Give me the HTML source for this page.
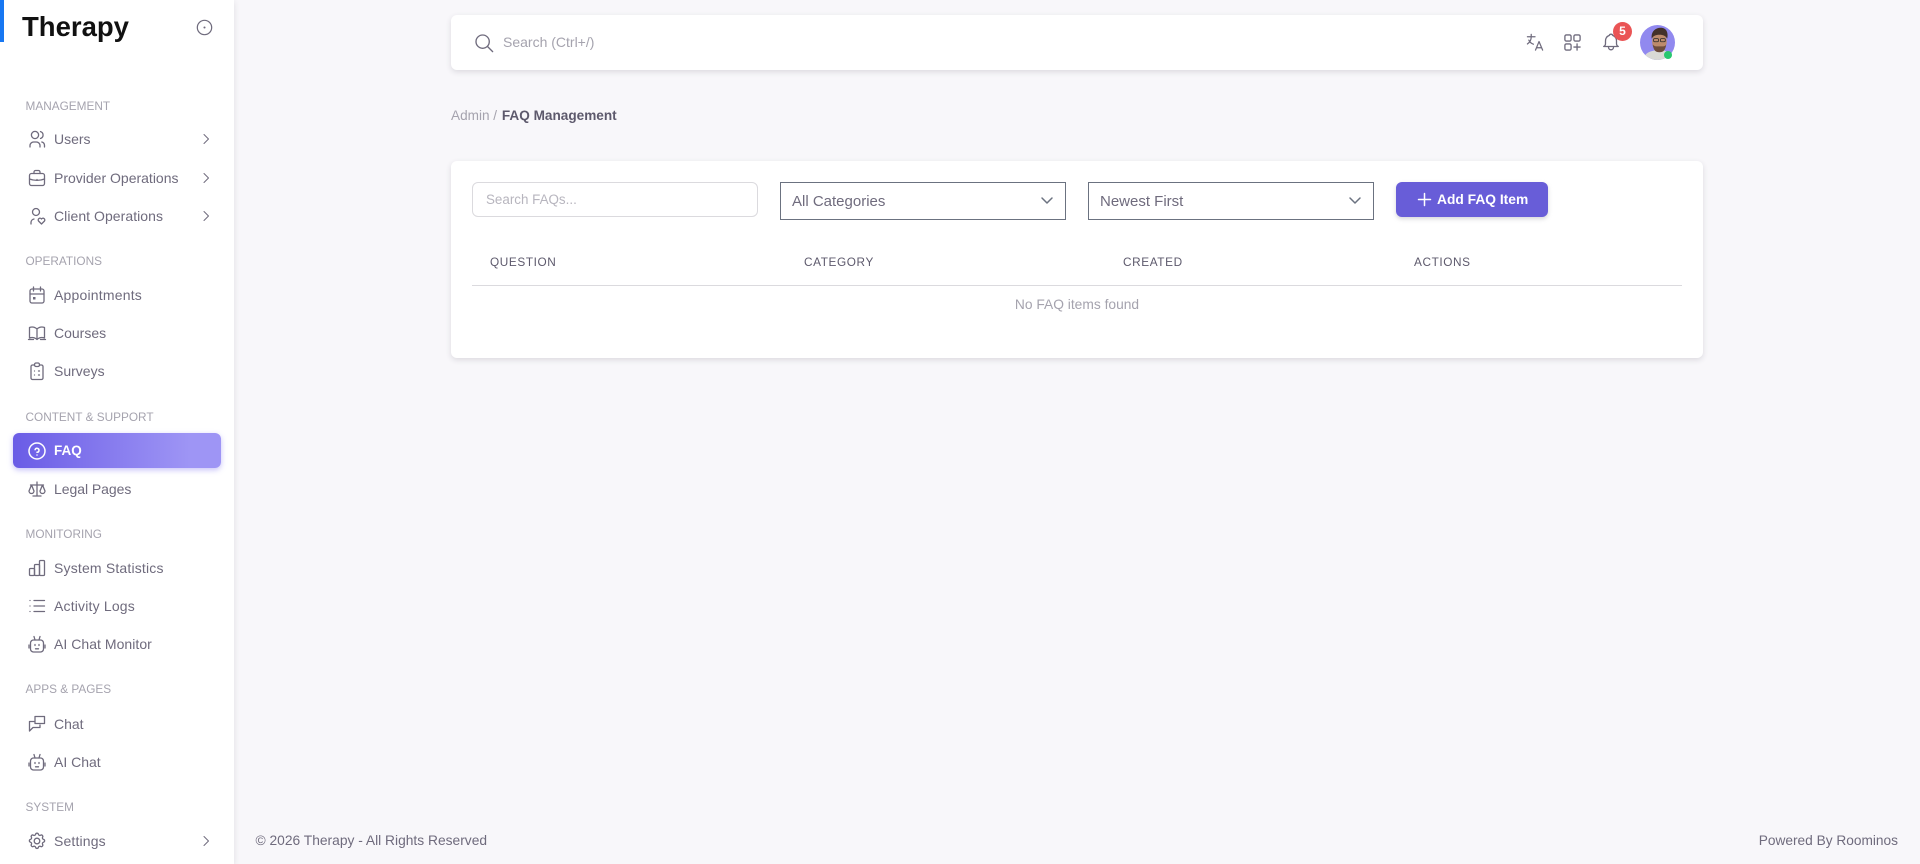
<!DOCTYPE html>
<html><head><meta charset="utf-8"><title>FAQ Management</title>
<style>
*{box-sizing:border-box}
html,body{margin:0;padding:0}
body{width:1920px;height:864px;overflow:hidden;background:#f8f7fa;font-family:"Liberation Sans",sans-serif;position:relative;color:#6f6b7d}
.t{position:absolute;white-space:nowrap;line-height:20px;height:20px}
.m{left:54px;font-size:14px;color:#6f6b7d}
.h{left:25.500px;font-size:11.800px;color:#a5a3ae}
.i{position:absolute;left:27px;width:20px;height:20px;fill:none;stroke:#6f6b7d;stroke-width:1.300;stroke-linecap:round;stroke-linejoin:round}
.c{position:absolute;left:200px;width:12px;height:12px;fill:none;stroke:#6f6b7d;stroke-width:1;stroke-linecap:round;stroke-linejoin:round}
.th{font-size:11.800px;letter-spacing:.6px;color:#5d596c}
#side{position:absolute;left:0;top:0;width:234px;height:864px;background:#fff;box-shadow:0 2px 6px rgba(47,43,61,.12)}
.box{position:absolute;background:#fff;border-radius:6px;box-shadow:0 2px 6px rgba(47,43,61,.14)}
.sel{position:absolute;top:182px;height:38px;width:286px;border:1px solid #6b7280;background:#fff}
</style></head><body>
<div id="side">
<div style="position:absolute;left:0;top:0;width:4px;height:42px;background:#1877f2"></div>
<div class="t" style="left:22px;top:15px;font-size:27.500px;line-height:24px;height:24px;font-weight:700;color:#111">Therapy</div>
<svg style="position:absolute;left:196px;top:19px;width:17px;height:17px" viewBox="0 0 18 18" fill="none" stroke="#6f6b7d" stroke-width="1.300"><circle cx="9" cy="9" r="7.600"/><circle cx="9" cy="9" r="1.100" fill="#6f6b7d" stroke="none"/></svg>

<div class="t h" style="top:96px">MANAGEMENT</div>
<svg class="i" style="top:129px" viewBox="0 0 20 20"><circle cx="8" cy="6" r="3.600"/><path d="M3 18v-1.600A3.600 3.600 0 0 1 6.600 13h2.800A3.600 3.600 0 0 1 13 16.400V18M13.500 2.600a3.600 3.600 0 0 1 0 6.900M17.500 18v-1.600a3.600 3.600 0 0 0-2.700-3.400"/></svg>
<div class="t m" style="top:129px">Users</div>
<svg class="c" style="top:133px" viewBox="0 0 12 12"><path d="M4 1.500 8.500 6 4 10.500"/></svg>
<svg class="i" style="top:168px" viewBox="0 0 20 20"><rect x="2.500" y="5.500" width="15" height="12" rx="2"/><path d="M7 5.500V4a1.500 1.500 0 0 1 1.500-1.500h3A1.500 1.500 0 0 1 13 4v1.500M2.500 11c4.500 1.800 10.500 1.800 15 0M10 11.500v.01"/></svg>
<div class="t m" style="top:168px">Provider Operations</div>
<svg class="c" style="top:172px" viewBox="0 0 12 12"><path d="M4 1.500 8.500 6 4 10.500"/></svg>
<svg class="i" style="top:206px" viewBox="0 0 20 20"><circle cx="9" cy="6" r="3.500"/><path d="M4 18v-1.600a3.600 3.600 0 0 1 3-3.400M14.500 18l-3-3a1.800 1.800 0 0 1 3-2 1.800 1.800 0 0 1 3 2z"/></svg>
<div class="t m" style="top:206px;letter-spacing:.05px">Client Operations</div>
<svg class="c" style="top:210px" viewBox="0 0 12 12"><path d="M4 1.500 8.500 6 4 10.500"/></svg>

<div class="t h" style="top:251px">OPERATIONS</div>
<svg class="i" style="top:285px" viewBox="0 0 20 20"><rect x="3" y="4" width="14" height="14" rx="2"/><path d="M13.500 2v4M6.500 2v4M3 9h14"/><rect x="6" y="12" width="2.500" height="2.500" fill="#6f6b7d" stroke="none"/></svg>
<div class="t m" style="top:285px;letter-spacing:.2px">Appointments</div>
<svg class="i" style="top:323px" viewBox="0 0 20 20"><path d="M10 16.500A7.500 7.500 0 0 0 2.500 15V4.500A7.500 7.500 0 0 1 10 6a7.500 7.500 0 0 1 7.500-1.500V15a7.500 7.500 0 0 0-7.500 1.500zM10 6v10.500M1.500 16.500h5M13.500 16.500h5"/></svg>
<div class="t m" style="top:323px">Courses</div>
<svg class="i" style="top:361px" viewBox="0 0 20 20"><path d="M7.500 4H5.500A1.500 1.500 0 0 0 4 5.500V17a1.500 1.500 0 0 0 1.500 1.500h9A1.500 1.500 0 0 0 16 17V5.500A1.500 1.500 0 0 0 14.500 4h-2"/><rect x="7.500" y="2" width="5" height="3.500" rx="1.500"/><path d="M7.500 10h.01M7.500 14h.01M11.500 10h1M11.500 14h1"/></svg>
<div class="t m" style="top:361px">Surveys</div>

<div class="t h" style="top:407px">CONTENT &amp; SUPPORT</div>
<div style="position:absolute;left:13px;top:433px;width:208px;height:35px;border-radius:6px;background:linear-gradient(90deg,#6a5ce6 0%,#9e95f5 85%);box-shadow:0 2px 6px rgba(115,103,240,.4)"></div>
<svg class="i" style="top:441px;stroke:#fff;stroke-width:1.500" viewBox="0 0 20 20"><circle cx="10" cy="10" r="8"/><path d="M10 14v.01M10 11.300a2 2 0 1 0-1.900-2.600"/></svg>
<div class="t m" style="top:441px;color:#fff;font-weight:700;font-size:13.500px">FAQ</div>
<svg class="i" style="top:479px" viewBox="0 0 20 20"><path d="M6 17h8M10 3v14M3.500 6h13M2 12l2.500-6L7 12a2.500 2.500 0 0 1-5 0zM13 12l2.500-6 2.500 6a2.500 2.500 0 0 1-5 0z"/></svg>
<div class="t m" style="top:479px;letter-spacing:-.05px">Legal Pages</div>

<div class="t h" style="top:524px">MONITORING</div>
<svg class="i" style="top:558px" viewBox="0 0 20 20"><rect x="2.500" y="10.500" width="5" height="7" rx="1"/><rect x="7.500" y="6.500" width="5" height="11" rx="1"/><rect x="12.500" y="2.500" width="5" height="15" rx="1"/></svg>
<div class="t m" style="top:558px;letter-spacing:.18px">System Statistics</div>
<svg class="i" style="top:596px" viewBox="0 0 20 20"><path d="M7 4.500h10.500M7 10h10.500M7 15.500h10.500M3 4.500v.01M3 10v.01M3 15.500v.01"/></svg>
<div class="t m" style="top:596px;letter-spacing:.18px">Activity Logs</div>
<svg class="i" style="top:634px" viewBox="0 0 20 20"><rect x="3.500" y="6" width="13" height="12" rx="3"/><path d="M7 2.500 8 6M13 2.500 12 6M8 10.500v1M12 10.500v1M2 11v3M18 11v3M8.500 14.800h3"/></svg>
<div class="t m" style="top:634px;letter-spacing:.04px">AI Chat Monitor</div>

<div class="t h" style="top:679px">APPS &amp; PAGES</div>
<svg class="i" style="top:714px" viewBox="0 0 20 20"><path d="M13 11v2.500H6L2.500 17V7.500H8M8 2.500h9.500V9.500H8z"/></svg>
<div class="t m" style="top:714px">Chat</div>
<svg class="i" style="top:752px" viewBox="0 0 20 20"><rect x="3.500" y="6" width="13" height="12" rx="3"/><path d="M7 2.500 8 6M13 2.500 12 6M8 10.500v1M12 10.500v1M2 11v3M18 11v3M8.500 14.800h3"/></svg>
<div class="t m" style="top:752px">AI Chat</div>

<div class="t h" style="top:797px">SYSTEM</div>
<svg class="i" style="top:831px" viewBox="0 0 20 20"><path d="M8.600 3.300c.4-1.500 2.400-1.500 2.800 0a1.500 1.500 0 0 0 2.200.9c1.300-.8 2.800.7 2 2a1.500 1.500 0 0 0 .9 2.200c1.500.4 1.500 2.400 0 2.800a1.500 1.500 0 0 0-.9 2.200c.8 1.300-.7 2.800-2 2a1.500 1.500 0 0 0-2.200.9c-.4 1.500-2.400 1.500-2.800 0a1.500 1.500 0 0 0-2.200-.9c-1.300.8-2.800-.7-2-2a1.500 1.500 0 0 0-.9-2.200c-1.500-.4-1.500-2.400 0-2.800a1.500 1.500 0 0 0 .9-2.200c-.8-1.300.7-2.800 2-2a1.500 1.500 0 0 0 2.200-.9z"/><circle cx="10" cy="10" r="2.800"/></svg>
<div class="t m" style="top:831px;letter-spacing:.15px">Settings</div>
<svg class="c" style="top:835px" viewBox="0 0 12 12"><path d="M4 1.500 8.500 6 4 10.500"/></svg>
</div>

<div class="box" style="left:451px;top:15px;width:1252px;height:55px"></div>
<svg style="position:absolute;left:474px;top:33px;width:20px;height:20px" viewBox="0 0 22 22" fill="none" stroke="#6f6b7d" stroke-width="1.500" stroke-linecap="round"><circle cx="9.500" cy="9.500" r="7.300"/><path d="M15 15l5.500 5.500"/></svg>
<div class="t" style="left:503px;top:32px;font-size:14px;color:#a5a3ae">Search (Ctrl+/)</div>

<svg style="position:absolute;left:1526px;top:33px;width:19px;height:19px" viewBox="0 0 20 20" fill="none" stroke="#6f6b7d" stroke-width="1.300" stroke-linecap="round" stroke-linejoin="round"><path d="M1.500 4h8M5.500 1.500V4c0 3.500-1.600 6-4 7.500M3 7.500c.8 2 2.500 3.500 4.800 4.300M10 18l3.700-9 3.800 9M11.300 15.500h5"/></svg>
<svg style="position:absolute;left:1563px;top:33px;width:19px;height:19px" viewBox="0 0 20 20" fill="none" stroke="#6f6b7d" stroke-width="1.400" stroke-linecap="round" stroke-linejoin="round"><rect x="2" y="2" width="6.500" height="6.500" rx="1.500"/><rect x="11.500" y="2" width="6.500" height="6.500" rx="1.500"/><rect x="2" y="11.500" width="6.500" height="6.500" rx="1.500"/><path d="M11.500 14.800h6.500M14.800 11.500V18"/></svg>
<svg style="position:absolute;left:1601px;top:32px;width:20px;height:20px" viewBox="0 0 20 20" fill="none" stroke="#6f6b7d" stroke-width="1.300" stroke-linecap="round" stroke-linejoin="round"><path d="M8.300 3.400a1.800 1.800 0 0 1 3.400 0A6 6 0 0 1 15.500 9v2.500a3.200 3.200 0 0 0 1.800 3H2.700a3.200 3.200 0 0 0 1.800-3V9a6 6 0 0 1 3.800-5.600M7.500 14.500v.8a2.500 2.500 0 0 0 5 0v-.8"/></svg>
<div style="position:absolute;left:1613px;top:22px;width:19px;height:19px;border-radius:50%;background:#ea5455;color:#fff;font-size:12px;font-weight:700;line-height:19px;text-align:center">5</div>
<svg style="position:absolute;left:1640px;top:25px;width:35px;height:35px" viewBox="0 0 36 36"><defs><clipPath id="a"><circle cx="18" cy="18" r="18"/></clipPath></defs><g clip-path="url(#a)"><rect width="36" height="36" fill="#9189ef"/><path d="M4 36c0-7 6-9 12-10h8c4 1 7 3 8 10z" fill="#d9d9d5"/><ellipse cx="20" cy="17" rx="7.500" ry="10" fill="#bc8a6c"/><path d="M12 14c-1-8 5-12 11-11 5 1 6 6 5 11-2-3-4-4-8-4s-6 1-8 4z" fill="#43312a"/><path d="M13 20c1 6 3 8 7 8s6-2 7-8c-1 2-3 2-7 2s-5 0-7-2z" fill="#6d4c3c"/><rect x="14" y="14" width="5" height="3.200" rx="1" fill="none" stroke="#2a2a2a" stroke-width=".8"/><rect x="21" y="14" width="5" height="3.200" rx="1" fill="none" stroke="#2a2a2a" stroke-width=".8"/></g></svg>
<div style="position:absolute;left:1664px;top:51px;width:8px;height:8px;border-radius:50%;background:#28c76f"></div>

<div class="t" style="left:451px;top:106px;font-size:13.600px;color:#a5a3ae">Admin / <span style="color:#5d596c;font-weight:700;margin-left:1px">FAQ Management</span></div>

<div class="box" style="left:451px;top:161px;width:1252px;height:197px"></div>
<div style="position:absolute;left:472px;top:182px;width:286px;height:35px;border:1px solid #dbdade;border-radius:6px;background:#fff"></div>
<div class="t" style="left:486px;top:190px;font-size:13.400px;color:#b7b5be">Search FAQs...</div>

<div class="sel" style="left:780px"></div>
<div class="t" style="left:792px;top:191.500px;font-size:15px;color:#6f6b7d">All Categories</div>
<svg style="position:absolute;left:1040px;top:195px;width:14px;height:12px" viewBox="0 0 14 12" fill="none" stroke="#6b7280" stroke-width="1.500" stroke-linecap="round" stroke-linejoin="round"><path d="M2 3l5 5 5-5"/></svg>
<div class="sel" style="left:1088px"></div>
<div class="t" style="left:1100px;top:191.500px;font-size:15px;color:#6f6b7d">Newest First</div>
<svg style="position:absolute;left:1348px;top:195px;width:14px;height:12px" viewBox="0 0 14 12" fill="none" stroke="#6b7280" stroke-width="1.500" stroke-linecap="round" stroke-linejoin="round"><path d="M2 3l5 5 5-5"/></svg>

<div style="position:absolute;left:1396px;top:182px;width:152px;height:35px;border-radius:6px;background:#685dd8;box-shadow:0 2px 4px rgba(165,163,174,.45)"></div>
<svg style="position:absolute;left:1417px;top:192px;width:15px;height:15px" viewBox="0 0 15 15" fill="none" stroke="#fff" stroke-width="1.500" stroke-linecap="round"><path d="M7.500 1.500v12M1.500 7.500h12"/></svg>
<div class="t" style="left:1437px;top:190px;font-size:13.800px;font-weight:700;color:#fff">Add FAQ Item</div>

<div class="t th" style="left:490px;top:252px">QUESTION</div>
<div class="t th" style="left:804px;top:252px">CATEGORY</div>
<div class="t th" style="left:1123px;top:252px">CREATED</div>
<div class="t th" style="left:1414px;top:252px">ACTIONS</div>
<div style="position:absolute;left:472px;top:285px;width:1210px;height:1px;background:#dbdade"></div>
<div class="t" style="left:472px;width:1210px;top:295px;text-align:center;font-size:13.800px;color:#a5a3ae">No FAQ items found</div>

<div class="t" style="left:255.500px;top:830.500px;font-size:13.800px;color:#6f6b7d">© 2026 Therapy - All Rights Reserved</div>
<div class="t" style="right:22px;top:830.500px;font-size:13.700px;color:#6f6b7d">Powered By Roominos</div>
</body></html>
